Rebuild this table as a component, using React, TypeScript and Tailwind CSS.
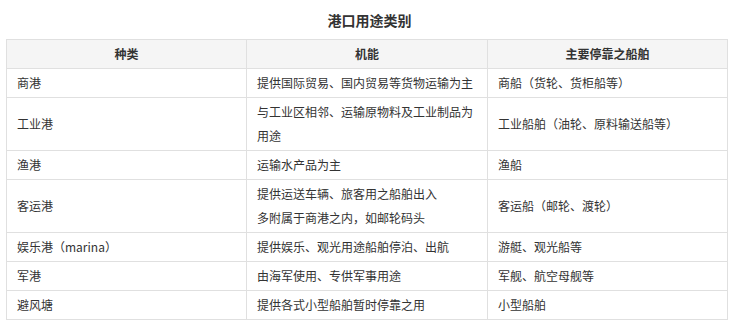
import React from "react";

const rows: [string, string[], string][] = [
  ["商港", ["提供国际贸易、国内贸易等货物运输为主"], "商船（货轮、货柜船等）"],
  ["工业港", ["与工业区相邻、运输原物料及工业制品为", "用途"], "工业船舶（油轮、原料输送船等）"],
  ["渔港", ["运输水产品为主"], "渔船"],
  ["客运港", ["提供运送车辆、旅客用之船舶出入", "多附属于商港之内，如邮轮码头"], "客运船（邮轮、渡轮）"],
  ["娱乐港（marina）", ["提供娱乐、观光用途船舶停泊、出航"], "游艇、观光船等"],
  ["军港", ["由海军使用、专供军事用途"], "军舰、航空母舰等"],
  ["避风塘", ["提供各式小型船舶暂时停靠之用"], "小型船舶"],
];

export default function App() {
  return (
    <div
      className="w-[739px] h-[326px] bg-white text-[#333]"
      style={{ fontFamily: '"Noto Sans CJK SC", "Noto Sans", sans-serif' }}
    >
      <div className="pt-[10px] h-[39px] text-center text-[14px] leading-[20px] font-bold text-[#333]">
        港口用途类别
      </div>
      <table className="ml-[6px] w-[721px] border-collapse table-fixed text-[12px]">
        <colgroup>
          <col className="w-[240px]" />
          <col className="w-[241px]" />
          <col className="w-[240px]" />
        </colgroup>
        <thead>
          <tr className="bg-[#f5f5f5]">
            {["种类", "机能", "主要停靠之船舶"].map((h) => (
              <th
                key={h}
                className="border border-[#e0e0e0] py-[2px] px-[10px] leading-[24px] font-bold text-center text-[#333]"
              >
                {h}
              </th>
            ))}
          </tr>
        </thead>
        <tbody>
          {rows.map(([a, b, c]) => (
            <tr key={a}>
              <td className="border border-[#e0e0e0] py-[2px] px-[10px] leading-[24px]">{a}</td>
              <td className="border border-[#e0e0e0] py-[2px] px-[10px] leading-[24px]">
                {b.map((l, i) => (
                  <div key={i}>{l}</div>
                ))}
              </td>
              <td className="border border-[#e0e0e0] py-[2px] px-[10px] leading-[24px]">{c}</td>
            </tr>
          ))}
        </tbody>
      </table>
    </div>
  );
}
